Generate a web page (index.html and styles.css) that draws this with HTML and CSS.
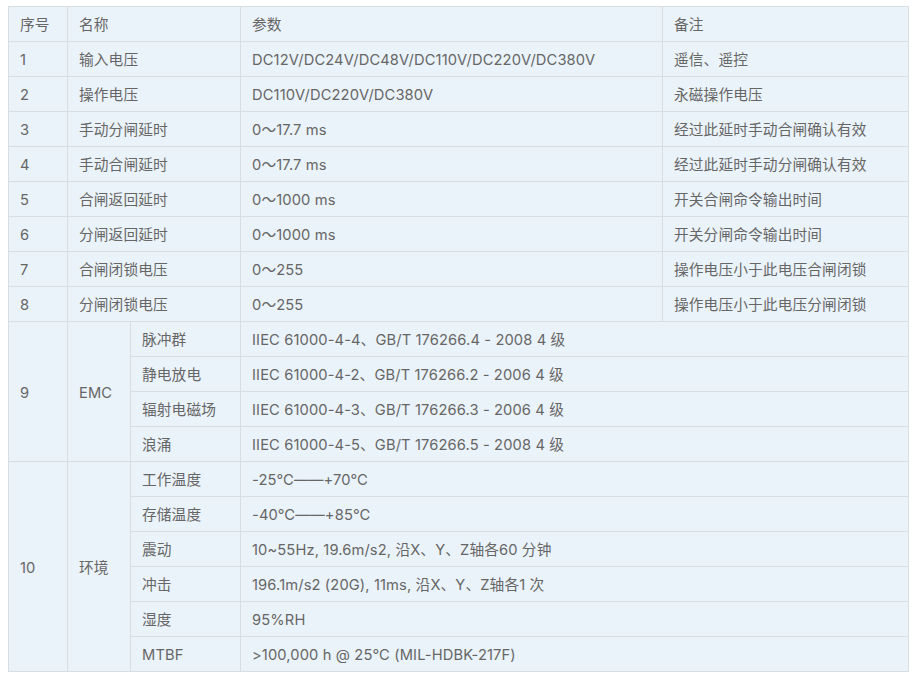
FILE: index.html
```html
<!DOCTYPE html>
<html lang="zh-CN">
<head>
<meta charset="utf-8">
<title>参数表</title>
<link rel="stylesheet" href="styles.css">
</head>
<body>
<table class="spec">
  <colgroup>
    <col class="c-no">
    <col class="c-name">
    <col class="c-sub">
    <col class="c-param">
    <col class="c-note">
  </colgroup>
  <tr><td>序号</td><td colspan="2">名称</td><td>参数</td><td>备注</td></tr>
  <tr><td>1</td><td colspan="2">输入电压</td><td>DC12V/DC24V/DC48V/DC110V/DC220V/DC380V</td><td>遥信、遥控</td></tr>
  <tr><td>2</td><td colspan="2">操作电压</td><td>DC110V/DC220V/DC380V</td><td>永磁操作电压</td></tr>
  <tr><td>3</td><td colspan="2">手动分闸延时</td><td>0～17.7 ms</td><td>经过此延时手动合闸确认有效</td></tr>
  <tr><td>4</td><td colspan="2">手动合闸延时</td><td>0～17.7 ms</td><td>经过此延时手动分闸确认有效</td></tr>
  <tr><td>5</td><td colspan="2">合闸返回延时</td><td>0～1000 ms</td><td>开关合闸命令输出时间</td></tr>
  <tr><td>6</td><td colspan="2">分闸返回延时</td><td>0～1000 ms</td><td>开关分闸命令输出时间</td></tr>
  <tr><td>7</td><td colspan="2">合闸闭锁电压</td><td>0～255</td><td>操作电压小于此电压合闸闭锁</td></tr>
  <tr><td>8</td><td colspan="2">分闸闭锁电压</td><td>0～255</td><td>操作电压小于此电压分闸闭锁</td></tr>
  <tr><td rowspan="4">9</td><td rowspan="4">EMC</td><td>脉冲群</td><td colspan="2">IIEC 61000-4-4、GB/T 176266.4 - 2008 4 级</td></tr>
  <tr><td>静电放电</td><td colspan="2">IIEC 61000-4-2、GB/T 176266.2 - 2006 4 级</td></tr>
  <tr><td>辐射电磁场</td><td colspan="2">IIEC 61000-4-3、GB/T 176266.3 - 2006 4 级</td></tr>
  <tr><td>浪涌</td><td colspan="2">IIEC 61000-4-5、GB/T 176266.5 - 2008 4 级</td></tr>
  <tr><td rowspan="6">10</td><td rowspan="6">环境</td><td>工作温度</td><td colspan="2">-25℃——+70℃</td></tr>
  <tr><td>存储温度</td><td colspan="2">-40℃——+85℃</td></tr>
  <tr><td>震动</td><td colspan="2">10~55Hz, 19.6m/s2, 沿X、Y、Z轴各60 分钟</td></tr>
  <tr><td>冲击</td><td colspan="2">196.1m/s2 (20G), 11ms, 沿X、Y、Z轴各1 次</td></tr>
  <tr><td>湿度</td><td colspan="2">95%RH</td></tr>
  <tr><td>MTBF</td><td colspan="2">&gt;100,000 h @ 25°C (MIL-HDBK-217F)</td></tr>
</table>
</body>
</html>
```

FILE: styles.css
```css
html, body {
  background: #ffffff;
}
body {
  margin: 6px 0 0 8px;
  font-family: "Inter", "Noto Sans CJK SC", sans-serif;
  font-size: 14.7px;
  letter-spacing: 0.12px;
  color: #666666;
}
.spec {
  width: 900px;
  table-layout: fixed;
  border-collapse: collapse;
  background: #ebf3fa;
}
.c-no { width: 59px; }
.c-name { width: 63px; }
.c-sub { width: 110px; }
.c-param { width: 422px; }
.c-note { width: 246px; }
.spec td {
  border: 1px solid #d9dee3;
  height: 32px;
  padding: 2px 0 0 11px;
  vertical-align: middle;
  white-space: nowrap;
  line-height: 20px;
}
```
